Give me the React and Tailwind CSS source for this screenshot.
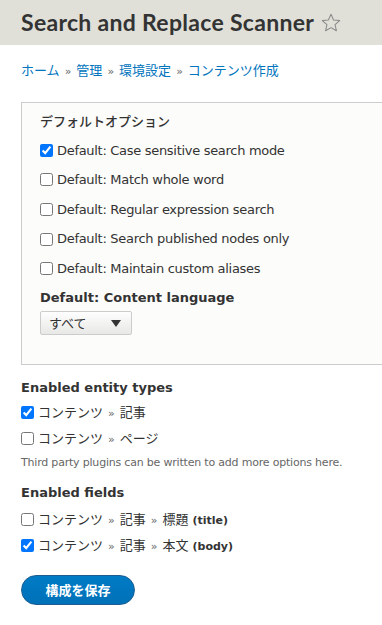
import React from "react";

const FONT = "font-['DejaVu_Sans','Noto_Sans_CJK_JP',sans-serif]";

const defaults = [
  { label: "Default: Case sensitive search mode", checked: true },
  { label: "Default: Match whole word", checked: false },
  { label: "Default: Regular expression search", checked: false },
  { label: "Default: Search published nodes only", checked: false },
  { label: "Default: Maintain custom aliases", checked: false },
];

const Sep = () => <span className="mx-[5px] text-[11px] text-[#666]">»</span>;

const Check = ({ checked }) => (
  <input
    type="checkbox"
    defaultChecked={checked}
    className="m-0 mr-[4px] h-[13px] w-[13px] shrink-0 accent-[#0075ff]"
  />
);

const App = () => {
  return (
    <div className={`${FONT} w-[382px] overflow-hidden bg-white text-[#333]`}>
      <div className="flex h-[45px] items-center bg-[#e0e0d8] pl-[21px]">
        <h1 className="whitespace-nowrap font-['Lato',sans-serif] text-[23px] font-bold tracking-[0.3px] text-[#333]">
          Search and Replace Scanner
        </h1>
        <svg width="22" height="22" viewBox="0 0 24 24" className="ml-[6px]">
          <path
            d="M12 2.5l2.8 6.2 6.7.6-5.1 4.5 1.5 6.6L12 17l-5.9 3.4 1.5-6.6-5.1-4.5 6.7-.6z"
            fill="none"
            stroke="#888"
            strokeWidth="1.1"
            strokeLinejoin="round"
          />
        </svg>
      </div>

      <div className="px-[21px] pt-[16px] text-[13px] text-[#0074bd]">
        ホーム<Sep />管理<Sep />環境設定<Sep />コンテンツ作成
      </div>

      <div className="px-[21px] pt-[21px]">
        <div className="w-[380px] border border-[#ccc] bg-[#fcfcfa] pb-[29px] pl-[18px] pt-[10px]">
          <div className="text-[13px] font-medium leading-[18px]">デフォルトオプション</div>
          <div className="mt-[5px] flex flex-col">
            {defaults.map((d) => (
              <label key={d.label} className="flex h-[29.6px] items-center text-[13px] tracking-[-0.3px]">
                <Check checked={d.checked} />
                {d.label}
              </label>
            ))}
          </div>
          <div className="mt-[6px] text-[13px] font-bold leading-[18px]">Default: Content language</div>
          <div className="mt-[4px] flex h-[24px] w-[92px] items-center justify-between rounded-[2px] border border-[#ccc] bg-gradient-to-b from-[#fefefe] to-[#e8e8e6] pl-[8px] pr-[10px] text-[13px]">
            <span>すべて</span>
            <svg width="10" height="7" viewBox="0 0 10 7">
              <path d="M0 0h10L5 7z" fill="#333" />
            </svg>
          </div>
        </div>

        <div className="mt-[14px] text-[13px] font-bold leading-[18px]">Enabled entity types</div>
        <label className="mt-[2px] flex h-[26px] items-center text-[13px]">
          <Check checked />
          <span>コンテンツ<Sep />記事</span>
        </label>
        <label className="flex h-[26px] items-center text-[13px]">
          <Check checked={false} />
          <span>コンテンツ<Sep />ページ</span>
        </label>
        <div className="mt-[5px] text-[11px] leading-[14px] tracking-[-0.2px] text-[#666]">
          Third party plugins can be written to add more options here.
        </div>

        <div className="mt-[14px] text-[13px] font-bold leading-[18px]">Enabled fields</div>
        <label className="mt-[4px] flex h-[26px] items-center text-[13px]">
          <Check checked={false} />
          <span>
            コンテンツ<Sep />記事<Sep />標題
            <span className="ml-[4px] text-[11px] font-bold">(title)</span>
          </span>
        </label>
        <label className="flex h-[26px] items-center text-[13px]">
          <Check checked />
          <span>
            コンテンツ<Sep />記事<Sep />本文
            <span className="ml-[4px] text-[11px] font-bold">(body)</span>
          </span>
        </label>

        <button className="mt-[17px] mb-[20px] flex h-[30px] w-[114px] items-center justify-center rounded-[20px] border border-[#1e5c90] bg-gradient-to-b from-[#007bc6] to-[#0071b8] text-[13px] font-bold text-white">
          構成を保存
        </button>
      </div>
    </div>
  );
};

export default App;
